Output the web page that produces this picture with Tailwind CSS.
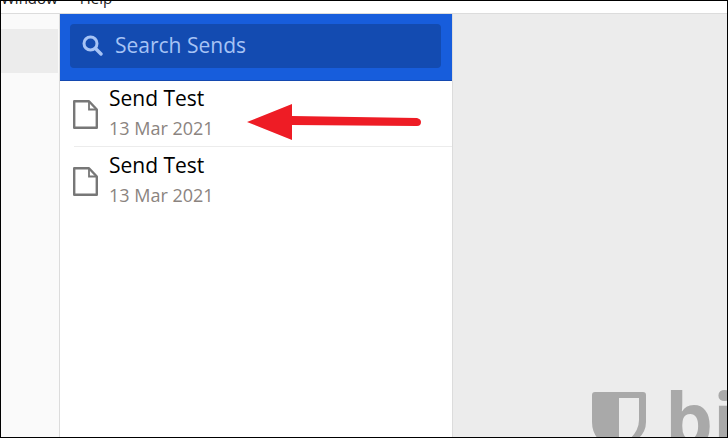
<!DOCTYPE html>
<html lang="en">
<head>
  <meta charset="UTF-8" />
  <title>Sends</title>
  <script src="https://cdn.jsdelivr.net/npm/@tailwindcss/browser@4"></script>
</head>
<body class="bg-white font-['Open_Sans',sans-serif] overflow-hidden">
  <div class="relative w-[728px] h-[438px] overflow-hidden flex flex-col border border-black box-border">
    <!-- Menu bar, cut off by the crop -->
    <header class="h-[12px] shrink-0 bg-white border-b border-[#dcdcdc] box-content overflow-hidden flex gap-[22px] text-[15px] leading-[15px] text-[#222]">
      <span class="-mt-[10px]">Window</span>
      <span class="-mt-[10px]">Help</span>
    </header>

    <div class="flex-1 flex min-h-0">
      <!-- Vault sidebar -->
      <aside class="w-[58px] shrink-0 bg-[#fafafa] pt-[15px]">
        <div class="h-[44px] w-[57px] bg-[#ececec]"></div>
      </aside>

      <!-- Sends list -->
      <section class="w-[394px] shrink-0 bg-white border-x border-[#dcdcdc]">
        <div class="h-[67px] bg-[#175ddc] border-b border-[#1449b0] px-[10px] pt-[10px]">
          <div class="h-[44px] w-[371px] rounded-[4px] bg-[#134bb1] flex items-center pl-[12px] pb-[2px] gap-[12px]">
            <svg class="w-[21px] h-[21px]" viewBox="0 0 21 21" fill="none" stroke="#a6c3f5">
              <circle cx="8.5" cy="8.5" r="6.5" stroke-width="3" />
              <path d="M13.5 13.5 19 19" stroke-width="3.4" stroke-linecap="round" />
            </svg>
            <span class="text-[21px] leading-[24px] text-[#a6c3f5]">Search Sends</span>
          </div>
        </div>

        <ul>
          <li class="h-[66px] ml-[14px] border-b border-[#ececec] flex">
            <svg class="w-[25px] h-[29px] mt-[19px] -ml-[1px] shrink-0" viewBox="0 0 25 29" fill="none" stroke="#777" stroke-width="2.4">
              <path d="M1.2 1.2H16L23.8 9.5V27.8H1.2Z" stroke-linejoin="round" />
              <path d="M16 1.2V9.5H23.8" stroke-width="1.8" />
            </svg>
            <div class="ml-[11px]">
              <p class="text-[21px] leading-[28px] mt-[3px] text-black">Send Test</p>
              <p class="text-[18px] leading-[24px] mt-[4px] text-[#8b8480]">13 Mar 2021</p>
            </div>
          </li>
          <li class="h-[66px] mt-[1px] ml-[14px] flex">
            <svg class="w-[25px] h-[29px] mt-[19px] -ml-[1px] shrink-0" viewBox="0 0 25 29" fill="none" stroke="#777" stroke-width="2.4">
              <path d="M1.2 1.2H16L23.8 9.5V27.8H1.2Z" stroke-linejoin="round" />
              <path d="M16 1.2V9.5H23.8" stroke-width="1.8" />
            </svg>
            <div class="ml-[11px]">
              <p class="text-[21px] leading-[28px] mt-[3px] text-black">Send Test</p>
              <p class="text-[18px] leading-[24px] mt-[4px] text-[#8b8480]">13 Mar 2021</p>
            </div>
          </li>
        </ul>
      </section>

      <!-- Empty detail pane with the watermark logo -->
      <main class="flex-1 bg-[#ececec] relative overflow-hidden">
        <svg class="absolute left-[139px] top-[378px] blur-[0.4px]" width="56" height="47" viewBox="0 0 56 47" fill="#a9a9a9">
          <path fill-rule="evenodd" d="M3 0H51Q54 0 54 3V30Q54 40 46 47H6Q0 40 0 30V3Q0 0 3 0ZM27 6V47H38Q47 38 47 28V6Z" />
        </svg>
        <span class="absolute left-[212px] top-[352px] text-[76px] leading-[104px] font-bold text-[#a9a9a9] blur-[0.4px]">bi</span>
      </main>
    </div>

    <!-- Annotation arrow drawn over the screenshot -->
    <svg class="absolute left-[245px] top-[100px]" width="180" height="44" viewBox="0 0 180 44" fill="#ee1c25">
      <path d="M1 21 46 3V15L171 17Q175 18 175 21Q175 25 171 25L46 24V39Z" />
    </svg>
  </div>
</body>
</html>
